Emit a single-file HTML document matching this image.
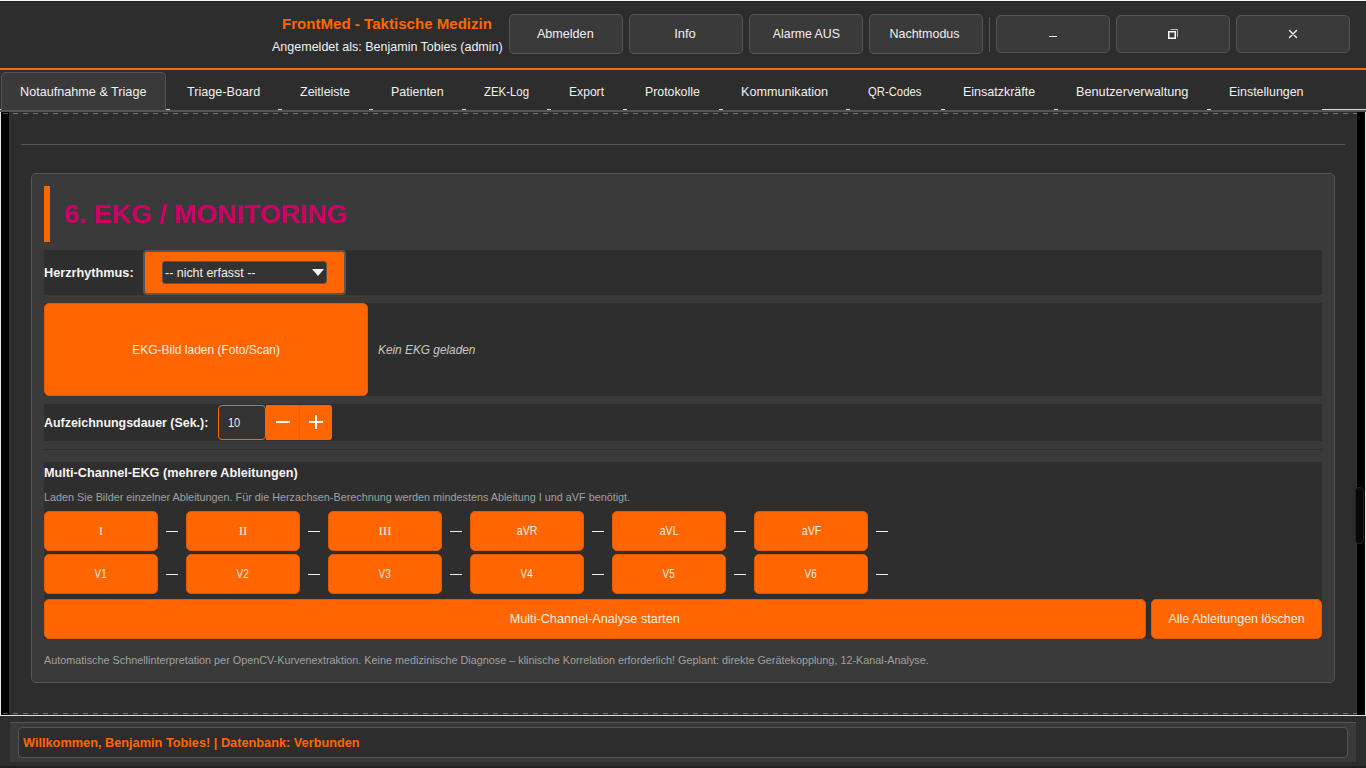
<!DOCTYPE html>
<html><head><meta charset="utf-8">
<style>
*{margin:0;padding:0;box-sizing:border-box}
html,body{width:1366px;height:768px;overflow:hidden;background:#2d2d2d;font-family:"Liberation Sans",sans-serif;color:#fff;position:relative}
.a{position:absolute}
.t{position:absolute;white-space:nowrap;line-height:1;transform-origin:0 0}
.hb{position:absolute;top:14px;height:40px;width:114px;background:#3a3a3a;border:1px solid #555;border-radius:5px;font-size:13px;color:#f0f0f0;display:flex;align-items:center;justify-content:center;padding-bottom:2px}
.tab{position:absolute;top:85px;transform-origin:0 0;font-size:13px;color:#f0f0f0;white-space:nowrap;line-height:1}
.mk{position:absolute;top:109px;width:4px;height:1px;background:#dcdcdc}
.ob{position:absolute;background:#ff6600;border:1px solid #e25a00;border-radius:5px;color:#fbeee4;font-size:12.5px;display:flex;align-items:center;justify-content:center;white-space:nowrap}
.lead{width:114px;height:40px;top:511px}
.dash{position:absolute;width:12px;height:1px;background:#eee}
</style></head><body>
<!-- top lines -->
<div class="a" style="left:0;top:0;width:1366px;height:1px;background:#f8f8f8"></div>
<div class="a" style="left:0;top:1px;width:1366px;height:1px;background:#1f1f1f"></div>

<!-- header -->
<div class="t" style="left:282px;top:17px;font-size:14px;font-weight:bold;color:#ff6600;transform:scaleX(1.077);transform-origin:0 0">FrontMed - Taktische Medizin</div>
<div class="t" style="left:272px;top:40px;font-size:13px;color:#f0f0f0;transform:scaleX(0.9625)">Angemeldet als: Benjamin Tobies (admin)</div>

<div class="hb" style="left:509px"><span style="display:inline-block;transform:scaleX(.969);margin-left:-2px">Abmelden</span></div>
<div class="hb" style="left:629px"><span style="display:inline-block;margin-left:-2px">Info</span></div>
<div class="hb" style="left:749px"><span style="display:inline-block;transform:scaleX(.948)">Alarme AUS</span></div>
<div class="hb" style="left:869px"><span style="display:inline-block;transform:scaleX(.959);margin-left:-3px">Nachtmodus</span></div>
<div class="a" style="left:989px;top:17px;width:1px;height:35px;background:#555"></div>
<div class="hb" style="left:996px;top:15px;height:38px"></div>
<div class="a" style="left:1049px;top:36px;width:8px;height:1px;background:#f4f4f4"></div>
<div class="hb" style="left:1116px;top:15px;height:38px"></div>
<svg class="a" style="left:1166px;top:28px" width="14" height="13" viewBox="0 0 14 13"><path d="M4.5 1.5H11.5V9" fill="none" stroke="#b8b8b8" stroke-width="1"/><rect x="2.75" y="3.75" width="6.5" height="6.5" fill="none" stroke="#f6f6f6" stroke-width="1.5"/></svg>
<div class="hb" style="left:1236px;top:15px;height:38px"></div>
<svg class="a" style="left:1288px;top:29px" width="10" height="10" viewBox="0 0 10 10"><path d="M1.5 1.5L8.5 8.5M8.5 1.5L1.5 8.5" stroke="#f4f4f4" stroke-width="1.4" stroke-linecap="round"/></svg>

<!-- orange line -->
<div class="a" style="left:0;top:68px;width:1366px;height:2px;background:#ff6600"></div>

<!-- tabs -->
<div class="a" style="left:1px;top:72px;width:165px;height:40px;background:#3a3a3a;border:1px solid #555;border-bottom:none;border-radius:5px 5px 0 0"></div>
<div class="tab" style="left:20px;transform:scaleX(0.972)">Notaufnahme &amp; Triage</div>
<div class="tab" style="left:187px;transform:scaleX(0.971)">Triage-Board</div>
<div class="tab" style="left:300px;transform:scaleX(0.962)">Zeitleiste</div>
<div class="tab" style="left:391px;transform:scaleX(0.96)">Patienten</div>
<div class="tab" style="left:484px;transform:scaleX(0.878)">ZEK-Log</div>
<div class="tab" style="left:569px;transform:scaleX(0.932)">Export</div>
<div class="tab" style="left:645px;transform:scaleX(0.947)">Protokolle</div>
<div class="tab" style="left:741px;transform:scaleX(0.972)">Kommunikation</div>
<div class="tab" style="left:868px;transform:scaleX(0.869)">QR-Codes</div>
<div class="tab" style="left:963px;transform:scaleX(0.96)">Einsatzkräfte</div>
<div class="tab" style="left:1076px;transform:scaleX(0.978)">Benutzerverwaltung</div>
<div class="tab" style="left:1229px;transform:scaleX(0.954)">Einstellungen</div>
<div class="mk" style="left:166px"></div>
<div class="mk" style="left:278px"></div>
<div class="mk" style="left:369px"></div>
<div class="mk" style="left:462px"></div>
<div class="mk" style="left:547px"></div>
<div class="mk" style="left:623px"></div>
<div class="mk" style="left:719px"></div>
<div class="mk" style="left:846px"></div>
<div class="mk" style="left:941px"></div>
<div class="mk" style="left:1054px"></div>
<div class="mk" style="left:1207px"></div>
<div class="mk" style="left:1322px;width:44px"></div>
<div class="a" style="left:0;top:110px;width:1366px;height:2px;background:#555"></div>

<!-- frame -->
<div class="a" style="left:0;top:112px;width:1px;height:604px;background:#e0e0e8"></div>
<div class="a" style="left:1365px;top:112px;width:1px;height:604px;background:#e0e0e8"></div>
<div class="a" style="left:1px;top:112px;width:8px;height:603px;background:#000"></div>
<div class="a" style="left:1357px;top:112px;width:8px;height:603px;background:#000"></div>
<div class="a" style="left:0;top:715px;width:1366px;height:1px;background:#e0e0e8"></div>
<div class="a" style="left:3px;top:113px;width:1362px;height:1px;background:repeating-linear-gradient(90deg,#727272 0 5px,transparent 5px 10px)"></div>
<div class="a" style="left:3px;top:713px;width:1362px;height:1px;background:repeating-linear-gradient(90deg,#727272 0 5px,transparent 5px 10px)"></div>

<div class="a" style="left:0;top:109px;width:1px;height:1px;background:#dcdcdc"></div>
<div class="a" style="left:3px;top:113px;width:5px;height:1px;background:#4a4a4a"></div>
<div class="a" style="left:3px;top:713px;width:5px;height:1px;background:#4a4a4a"></div>
<div class="a" style="left:1357px;top:113px;width:8px;height:1px;background:#000"></div>
<div class="a" style="left:1357px;top:713px;width:8px;height:1px;background:#000"></div>
<div class="a" style="left:1355px;top:487px;width:9px;height:57px;background:#080808;border:1px solid #242424;border-radius:4px"></div>
<!-- separator -->
<div class="a" style="left:21px;top:144px;width:1324px;height:1px;background:#555"></div>

<!-- panel -->
<div class="a" style="left:31px;top:173px;width:1304px;height:510px;background:#3a3a3a;border:1px solid #555;border-radius:5px"></div>
<div class="a" style="left:44px;top:186px;width:6px;height:56px;background:#ff6600"></div>
<div class="t" style="left:64px;top:201px;font-size:26px;font-weight:bold;color:#cc0066;transform:scaleX(1.029)">6. EKG / MONITORING</div>

<!-- row 1 -->
<div class="a" style="left:44px;top:250px;width:1278px;height:45px;background:#2e2e2e"></div>
<div class="t" style="left:44px;top:266px;font-size:13px;font-weight:bold;color:#f5f5f5;transform:scaleX(.977)">Herzrhythmus:</div>
<div class="a" style="left:143px;top:250px;width:203px;height:45px;background:#ff6600;border:2px solid #555;border-radius:4px"></div>
<div class="a" style="left:162px;top:261px;width:165px;height:23px;background:#333;border:1px solid #555;border-radius:3px"></div>
<div class="t" style="left:165px;top:266px;font-size:13px;color:#f0f0f0;transform:scaleX(.956)">-- nicht erfasst --</div>
<svg class="a" style="left:312px;top:269px" width="12" height="7" viewBox="0 0 12 7"><path d="M0 0H12L6 7Z" fill="#f4f4f4"/></svg>

<!-- row 2 -->
<div class="a" style="left:44px;top:303px;width:1278px;height:93px;background:#2e2e2e"></div>
<div class="ob" style="left:44px;top:303px;width:324px;height:93px"><span style="display:inline-block;transform:scaleX(.958)">EKG-Bild laden (Foto/Scan)</span></div>
<div class="t" style="left:378px;top:343px;font-size:13px;font-style:italic;color:#c8c8c8;transform:scaleX(.911)">Kein EKG geladen</div>

<!-- row 3 -->
<div class="a" style="left:44px;top:404px;width:1278px;height:37px;background:#2e2e2e"></div>
<div class="t" style="left:44px;top:416px;font-size:13px;font-weight:bold;color:#f5f5f5;transform:scaleX(.956)">Aufzeichnungsdauer (Sek.):</div>
<div class="a" style="left:218px;top:405px;width:48px;height:35px;background:#333;border:1px solid #ff6600;border-radius:4px"></div>
<div class="t" style="left:228px;top:416px;font-size:13px;color:#f0f0f0;transform:scaleX(.847)">10</div>
<div class="a" style="left:266px;top:405px;width:66px;height:35px;background:#ff6600;border-radius:0 3px 3px 0"></div>
<div class="a" style="left:299px;top:405px;width:1px;height:35px;background:#e85e00"></div>
<div class="a" style="left:276px;top:421px;width:14px;height:2px;background:#fff"></div>
<div class="a" style="left:309px;top:421px;width:14px;height:2px;background:#fff"></div>
<div class="a" style="left:315px;top:415px;width:2px;height:14px;background:#fff"></div>

<div class="a" style="left:44px;top:449px;width:1278px;height:1px;background:#2e2e2e"></div>

<!-- multi channel -->
<div class="a" style="left:44px;top:462px;width:1278px;height:177px;background:#2e2e2e"></div>
<div class="t" style="left:44px;top:466px;font-size:13px;font-weight:bold;color:#f5f5f5;transform:scaleX(.975)">Multi-Channel-EKG (mehrere Ableitungen)</div>
<div class="t" style="left:44px;top:492px;font-size:11px;color:#a0a0a0;transform:scaleX(.982)">Laden Sie Bilder einzelner Ableitungen. Für die Herzachsen-Berechnung werden mindestens Ableitung I und aVF benötigt.</div>

<div class="ob lead" style="left:44px"><span style="font-family:'Liberation Serif',serif;font-size:13px">I</span></div>
<div class="ob lead" style="left:186px"><span style="font-family:'Liberation Serif',serif;font-size:13px">II</span></div>
<div class="ob lead" style="left:328px"><span style="font-family:'Liberation Serif',serif;font-size:13px">III</span></div>
<div class="ob lead" style="left:470px"><span style="display:inline-block;transform:scaleX(.85)">aVR</span></div>
<div class="ob lead" style="left:612px"><span style="display:inline-block;transform:scaleX(.85)">aVL</span></div>
<div class="ob lead" style="left:754px"><span style="display:inline-block;transform:scaleX(.85)">aVF</span></div>
<div class="dash" style="left:166px;top:531px"></div>
<div class="dash" style="left:308px;top:531px"></div>
<div class="dash" style="left:450px;top:531px"></div>
<div class="dash" style="left:592px;top:531px"></div>
<div class="dash" style="left:734px;top:531px"></div>
<div class="dash" style="left:876px;top:531px"></div>

<div class="ob lead" style="left:44px;top:554px"><span style="display:inline-block;transform:scaleX(.79)">V1</span></div>
<div class="ob lead" style="left:186px;top:554px"><span style="display:inline-block;transform:scaleX(.79)">V2</span></div>
<div class="ob lead" style="left:328px;top:554px"><span style="display:inline-block;transform:scaleX(.79)">V3</span></div>
<div class="ob lead" style="left:470px;top:554px"><span style="display:inline-block;transform:scaleX(.79)">V4</span></div>
<div class="ob lead" style="left:612px;top:554px"><span style="display:inline-block;transform:scaleX(.79)">V5</span></div>
<div class="ob lead" style="left:754px;top:554px"><span style="display:inline-block;transform:scaleX(.79)">V6</span></div>
<div class="dash" style="left:166px;top:574px"></div>
<div class="dash" style="left:308px;top:574px"></div>
<div class="dash" style="left:450px;top:574px"></div>
<div class="dash" style="left:592px;top:574px"></div>
<div class="dash" style="left:734px;top:574px"></div>
<div class="dash" style="left:876px;top:574px"></div>

<div class="ob" style="left:44px;top:599px;width:1102px;height:40px"><span style="display:inline-block;transform:scaleX(1.016);margin-left:-1px">Multi-Channel-Analyse starten</span></div>
<div class="ob" style="left:1151px;top:599px;width:171px;height:40px">Alle Ableitungen löschen</div>

<div class="t" style="left:44px;top:655px;font-size:11px;color:#a0a0a0;transform:scaleX(.983)">Automatische Schnellinterpretation per OpenCV-Kurvenextraktion. Keine medizinische Diagnose – klinische Korrelation erforderlich! Geplant: direkte Gerätekopplung, 12-Kanal-Analyse.</div>

<!-- status bar -->
<div class="a" style="left:10px;top:722px;width:1346px;height:40px;background:#3a3a3a;border-top:1px solid #555"></div>
<div class="a" style="left:18px;top:727px;width:1330px;height:31px;background:#2d2d2d;border:1px solid #555;border-radius:4px"></div>
<div class="t" style="left:23px;top:736px;font-size:13px;font-weight:bold;color:#ff6600;transform:scaleX(.980)">Willkommen, Benjamin Tobies! | Datenbank: Verbunden</div>
<div class="a" style="left:0;top:766px;width:1366px;height:2px;background:#202020"></div>
</body></html>
